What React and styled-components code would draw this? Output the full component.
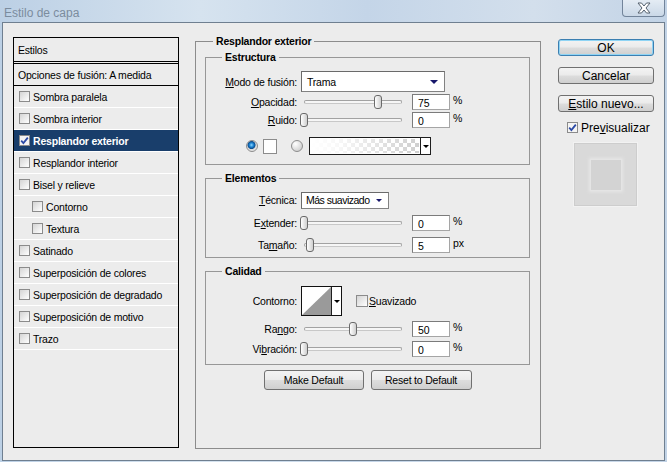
import React from 'react';
import styled, { createGlobalStyle } from 'styled-components';

const Global = createGlobalStyle`
  html, body { margin: 0; padding: 0; }
  body {
    width: 667px; height: 462px; overflow: hidden;
    font-family: "Liberation Sans", Arial, sans-serif;
    font-size: 10.5px; letter-spacing: -0.2px; color: #000;
  }
  #root { width: 667px; height: 462px; }
`;

const Window = styled.div`
  width: 667px; height: 462px; box-sizing: border-box;
  display: flex; flex-direction: column;
  padding: 0 2px 1px 2px;
  background: linear-gradient(to right, #bcd0e5 0%, #d6e3ef 30%, #c4d5e8 55%, #d3dfec 80%, #c2d3e6 100%);
`;

const TitleBar = styled.div`
  height: 22px; flex: none;
  display: flex; justify-content: space-between; align-items: flex-start;
  margin: 0 0 0 2px;
`;

const Title = styled.span`
  font-size: 12px; letter-spacing: 0; line-height: 26px; color: #7b8c9e;
`;

const CloseButton = styled.div`
  width: 43px; height: 17px; box-sizing: border-box;
  border: 1px solid #72849a; border-top: none; border-radius: 0 0 4px 4px;
  background: linear-gradient(#e4ecf4, #cad8e7);
  display: flex; align-items: center; justify-content: center;
`;

const Body = styled.div`
  flex: 1; display: flex; align-items: flex-start;
  background: #ececec; border: 1px solid #6f7f90;
  padding: 11px 0 0 10px;
`;

const List = styled.div`
  width: 166px; height: 411px; box-sizing: border-box; margin-top: 3px;
  border: 1px solid #000; display: flex; flex-direction: column;
`;

const ListHeader = styled.div`
  height: 23px; border-bottom: 3px double #000;
  display: flex; align-items: center; padding-left: 4px;
`;

const BlendRow = styled.div`
  height: 21px; border-bottom: 1px solid #000;
  display: flex; align-items: center; padding-left: 4px;
`;

const StyleRow = styled.div`
  height: 21px; border-bottom: 1px solid #fff;
  display: flex; align-items: center; gap: 3px;
  padding-left: ${p => (p.$indent ? 18 : 5)}px;
  background: ${p => (p.$selected ? '#193e6b' : 'transparent')};
  color: ${p => (p.$selected ? '#fff' : '#000')};
  font-weight: ${p => (p.$selected ? 'bold' : 'normal')};
`;

const Box = styled.span`
  width: ${p => p.$size || 11}px; height: ${p => p.$size || 11}px; flex: none; box-sizing: border-box;
  border: 1px solid #8b8b8b;
  background: ${p => (p.$checked ? '#f4f4f4' : 'linear-gradient(135deg, #d4d4d4 0%, #f2f2f2 70%, #fff 100%)')};
  display: flex; align-items: center; justify-content: center;
`;

const Check = ({ checked, size }) => (
  <Box $checked={checked} $size={size}>
    {checked && (
      <svg width="9" height="9" viewBox="0 0 9 9">
        <path d="M1.2 4.6 L3.4 7 L7.8 1.6" fill="none" stroke="#2b4aa6" strokeWidth="1.8" />
      </svg>
    )}
  </Box>
);

const Group = styled.fieldset`
  margin: 0; min-width: 0; box-sizing: border-box;
  border: 1px solid ${p => (p.$outer ? '#8c8c8c' : '#979797')};
  padding: ${p => p.$pad};
  ${p => p.$outer && 'width: 346px; height: 415px; margin-left: 16px;'}
  margin-top: ${p => p.$mt || 0}px;
`;

const Legend = styled.legend`
  padding: 0 3px; margin-left: ${p => p.$ml}px;
  font-weight: bold; line-height: 14px;
`;

const Row = styled.div`
  display: flex; align-items: center;
  height: ${p => p.$h || 18}px; margin-top: ${p => p.$mt || 0}px;
`;

const Label = styled.span`
  width: 91px; margin-right: 4px; text-align: right; white-space: nowrap;
`;

const Select = styled.div`
  width: ${p => p.$w}px; height: ${p => p.$h}px; box-sizing: border-box;
  border: 1px solid #828282; border-top-color: #6a6a6a; border-left-color: #6a6a6a;
  background: #fff; white-space: nowrap;
  display: flex; align-items: center; justify-content: space-between;
  padding: 0 ${p => p.$pr || 6}px 0 ${p => p.$pl || 5}px;
  letter-spacing: ${p => p.$ls || -0.2}px;
`;

const Caret = styled.span`
  width: 0; height: 0; flex: none;
  border-left: ${p => p.$s || 4}px solid transparent;
  border-right: ${p => p.$s || 4}px solid transparent;
  border-top: ${p => p.$s || 4}px solid ${p => p.$c || '#17176b'};
`;

const SliderBox = styled.div`
  position: relative; width: 104px; height: 18px; flex: none;
  display: flex; align-items: center;
`;

const Track = styled.div`
  flex: 1; margin: 0 3px; height: 2px;
  border: 1px solid #a2a2a2; border-bottom-color: #c8c8c8; border-radius: 3px;
  background: #f6f6f6;
`;

const Thumb = styled.div`
  position: absolute; top: 2px; width: 8px; height: 14px; box-sizing: border-box;
  border: 1px solid #6a6a6a; border-radius: 3px;
  background: linear-gradient(to right, #ffffff, #cfcfcf);
`;

const Slider = ({ pct }) => (
  <SliderBox>
    <Track />
    <Thumb style={{ left: `${3 + pct * 98 - 4}px` }} />
  </SliderBox>
);

const Field = styled.div`
  width: 38px; height: 16px; margin-left: 7px; box-sizing: border-box; flex: none;
  border: 1px solid #7b7b7b; border-bottom-color: #a5a5a5; border-right-color: #a5a5a5;
  background: #fff; padding: 2px 0 0 5px; line-height: 12px;
`;

const Unit = styled.span`
  margin-left: 3px; align-self: flex-start; line-height: 14px;
`;

const ColorRow = styled.div`
  display: flex; align-items: center; height: 18px; margin-top: 8px; padding-left: 40px;
`;

const Radio = styled.span`
  width: 12px; height: 12px; flex: none; border-radius: 50%; box-sizing: border-box;
  margin-left: ${p => p.$ml || 0}px;
  border: 1px solid #8d8d8d;
  background: ${p =>
    p.$on
      ? 'radial-gradient(circle at 45% 40%, #8fd7ff 0, #1f86d4 2px, #0b4c8e 3.6px, #d9d9d9 4.4px, #f7f7f7 100%)'
      : 'radial-gradient(circle at 35% 30%, #ffffff 0, #e4e4e4 45%, #c4c4c4 100%)'};
`;

const Swatch = styled.span`
  width: 14px; height: 15px; box-sizing: border-box; margin-left: 5px;
  border: 1px solid #8c8c8c; background: #fff;
`;

const GradientPicker = styled.div`
  width: 122px; height: 18px; box-sizing: border-box; margin-left: 6px;
  border: 1px solid #1e1e1e; display: flex; background: #fff;
`;

const GradientPreview = styled.div`
  flex: 1; margin: 1px;
  background:
    linear-gradient(to right, #fff 0%, rgba(255,255,255,0.85) 25%, rgba(255,255,255,0) 100%),
    conic-gradient(#cfcfcf 25%, #fff 0 50%, #cfcfcf 0 75%, #fff 0) 0 0 / 8px 8px;
`;

const PickerArrow = styled.div`
  width: 9px; border-left: 1px solid #1e1e1e; background: #fff;
  display: flex; align-items: center; justify-content: center;
`;

const ContourPicker = styled.div`
  width: 41px; height: 30px; box-sizing: border-box;
  border: 1px solid #111; display: flex; background: #fff;
`;

const CheckLabel = styled.span`
  display: flex; align-items: center; gap: ${p => p.$gap || 2}px;
  margin-left: ${p => p.$ml || 0}px;
`;

const ButtonRow = styled.div`
  display: flex; justify-content: center; gap: 7px; margin-top: 5px;
`;

const PushButton = styled.div`
  width: ${p => p.$w}px; height: ${p => p.$h || 20}px; box-sizing: border-box; flex: none;
  border: 1px solid #707070; border-radius: 3px;
  background: linear-gradient(#f3f3f3 0%, #ebebeb 48%, #dddddd 52%, #cfcfcf 100%);
  display: flex; align-items: center; justify-content: center;
  font-size: ${p => p.$fs || 10.5}px; letter-spacing: ${p => (p.$fs ? 0 : -0.2)}px;
  margin-top: ${p => p.$mt || 0}px;
  ${p => p.$default && 'border-color: #3c7fb1; box-shadow: inset 0 0 0 1px #8fd4f4;'}
`;

const Side = styled.div`
  width: 96px; margin-left: 17px; margin-top: 5px;
  display: flex; flex-direction: column;
`;

const PreviewCheck = styled.div`
  display: flex; align-items: center; gap: 3px; margin: 10px 0 0 9px;
  font-size: 12px; letter-spacing: 0; height: 11px;
`;

const PreviewBox = styled.div`
  width: 65px; height: 65px; box-sizing: border-box; margin: 9px 0 0 15px;
  background: #d9d9d9; border: 1px solid #f2f2f2; outline: 1px solid #cdcdcd; outline-offset: -2px;
  display: flex; align-items: center; justify-content: center;
`;

const PreviewSquare = styled.div`
  width: 32px; height: 32px; box-sizing: border-box;
  background: #d3d3d3; border: 1px solid #e4e4e4;
  box-shadow: 0 0 3px 1px #e6e6e6;
`;

const styleRows = [
  { label: 'Sombra paralela' },
  { label: 'Sombra interior' },
  { label: 'Resplandor exterior', checked: true, selected: true },
  { label: 'Resplandor interior' },
  { label: 'Bisel y relieve' },
  { label: 'Contorno', indent: true },
  { label: 'Textura', indent: true },
  { label: 'Satinado' },
  { label: 'Superposición de colores' },
  { label: 'Superposición de degradado' },
  { label: 'Superposición de motivo' },
  { label: 'Trazo' },
];

const SliderRow = ({ label, pct, value, unit, mt }) => (
  <Row $mt={mt}>
    <Label>{label}</Label>
    <Slider pct={pct} />
    <Field>{value}</Field>
    <Unit>{unit}</Unit>
  </Row>
);

export default function App() {
  return (
    <>
      <Global />
      <Window>
        <TitleBar>
          <Title>Estilo de capa</Title>
          <CloseButton>
            <svg width="14" height="12" viewBox="0 0 14 12">
              <polygon
                points="1,1 4.5,1 7,4 9.5,1 13,1 9,6 13,11 9.5,11 7,8 4.5,11 1,11 5,6"
                fill="#fff" stroke="#55616e" strokeWidth="1" strokeLinejoin="round"
              />
            </svg>
          </CloseButton>
        </TitleBar>
        <Body>
          <List>
            <ListHeader>Estilos</ListHeader>
            <BlendRow>Opciones de fusión: A medida</BlendRow>
            {styleRows.map(r => (
              <StyleRow key={r.label} $indent={r.indent} $selected={r.selected}>
                <Check checked={r.checked} />
                {r.label}
              </StyleRow>
            ))}
          </List>

          <Group $outer $pad="2px 10px 0 9px">
            <Legend $ml={8}>Resplandor exterior</Legend>

            <Group $pad="7px 0 9px 0">
              <Legend $ml={16}>Estructura</Legend>
              <Row $h={21}>
                <Label><u>M</u>odo de fusión:</Label>
                <Select $w={144} $h={21}>
                  <span>Trama</span>
                  <Caret />
                </Select>
              </Row>
              <SliderRow mt={1} label={<><u>O</u>pacidad:</>} pct={0.75} value="75" unit="%" />
              <SliderRow label={<><u>R</u>uido:</>} pct={0} value="0" unit="%" />
              <ColorRow>
                <Radio $on />
                <Swatch />
                <Radio $ml={14} />
                <GradientPicker>
                  <GradientPreview />
                  <PickerArrow><Caret $s={3} $c="#000" /></PickerArrow>
                </GradientPicker>
              </ColorRow>
            </Group>

            <Group $mt={6} $pad="6px 0 3px 0">
              <Legend $ml={16}>Elementos</Legend>
              <Row>
                <Label><u>T</u>écnica:</Label>
                <Select $w={88} $h={17} $pl={4} $pr={6} $ls={-0.5}>
                  <span>Más suavizado</span>
                  <Caret $s={3.5} />
                </Select>
              </Row>
              <SliderRow mt={5} label={<>E<u>x</u>tender:</>} pct={0} value="0" unit="%" />
              <SliderRow mt={4} label={<>Ta<u>m</u>año:</>} pct={0.06} value="5" unit="px" />
            </Group>

            <Group $mt={6} $pad="8px 0 6px 0">
              <Legend $ml={16}>Calidad</Legend>
              <Row $h={30}>
                <Label>Contorno:</Label>
                <ContourPicker>
                  <svg width="29" height="28" viewBox="0 0 29 28">
                    <polygon points="0,28 29,0 29,28" fill="#9a9a9a" />
                  </svg>
                  <PickerArrow><Caret $s={3} $c="#000" /></PickerArrow>
                </ContourPicker>
                <CheckLabel $ml={14} $gap={1}>
                  <Check size={12} />
                  <span><u>S</u>uavizado</span>
                </CheckLabel>
              </Row>
              <SliderRow mt={4} label={<>Ra<u>n</u>go:</>} pct={0.5} value="50" unit="%" />
              <SliderRow mt={2} label={<>Vi<u>b</u>ración:</>} pct={0} value="0" unit="%" />
            </Group>

            <ButtonRow>
              <PushButton $w={100}>Make Default</PushButton>
              <PushButton $w={101}>Reset to Default</PushButton>
            </ButtonRow>
          </Group>

          <Side>
            <PushButton $w={96} $h={17} $fs={12} $default>OK</PushButton>
            <PushButton $w={96} $h={17} $fs={12} $mt={11}>Cancelar</PushButton>
            <PushButton $w={96} $h={17} $fs={12} $mt={11}><span><u>E</u>stilo nuevo...</span></PushButton>
            <PreviewCheck>
              <Check checked />
              <span>Pre<u>v</u>isualizar</span>
            </PreviewCheck>
            <PreviewBox>
              <PreviewSquare />
            </PreviewBox>
          </Side>
        </Body>
      </Window>
    </>
  );
}
